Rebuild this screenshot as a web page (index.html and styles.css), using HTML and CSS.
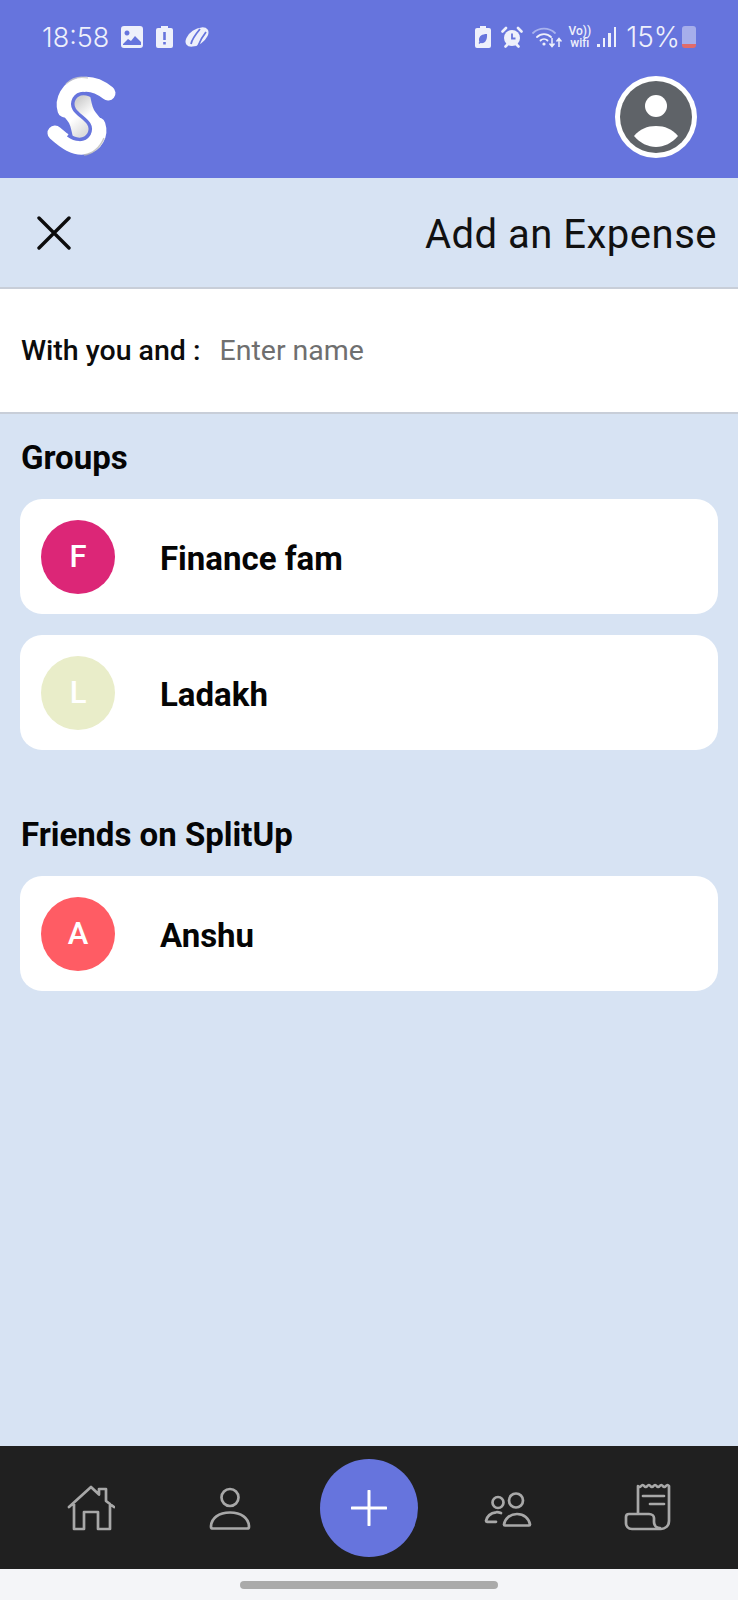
FILE: index.html
```html
<!DOCTYPE html>
<html lang="en">

<head>
    <meta charset="UTF-8">
    <meta name="viewport" content="width=device-width, initial-scale=1.0">
    <title>Add an Expense</title>

    <link rel="stylesheet" href="styles.css">
</head>

<body>
    <div class="app">
        <div class="topbar">
            <div class="statusbar">
                <div class="status-left">
                    <span class="clock">18:58</span>
                    <svg class="st-gallery" viewBox="0 0 22 22"><path fill="#eef0fb" fill-rule="evenodd" d="M3 0h16a3 3 0 0 1 3 3v16a3 3 0 0 1-3 3H3a3 3 0 0 1-3-3V3a3 3 0 0 1 3-3zM6 4.500a2.500 2.500 0 1 0 .010 0zM2 18l5-5 3 2 4-5 6 6v3H2z"/></svg>
                    <svg class="st-batt" viewBox="0 0 17 22"><path fill="#eef0fb" fill-rule="evenodd" d="M5 0h7v2h3a2 2 0 0 1 2 2v16a2 2 0 0 1-2 2H2a2 2 0 0 1-2-2V4a2 2 0 0 1 2-2h3zM7.200 6v8h2.600V6zM7.200 16v2.600h2.600V16z"/></svg>
                    <svg class="st-app" viewBox="0 0 26 20"><ellipse cx="13" cy="10" rx="13" ry="7.500" fill="#eef0fb" transform="rotate(-35 13 10)"/><path d="M7 17C8 12 11 8 16 2M14 19c2-5 4-9 8-14" fill="none" stroke="#6674dd" stroke-width="1.800"/></svg>
                </div>
                <div class="status-right">
                    <svg class="st-leaf" viewBox="0 0 16 22"><path fill="#eef0fb" fill-rule="evenodd" d="M5 0h6v2h3a2 2 0 0 1 2 2v16a2 2 0 0 1-2 2H2a2 2 0 0 1-2-2V4a2 2 0 0 1 2-2h3zM12 8C7 8 4 10 4 14c0 .7.100 1.300.400 1.900L3.500 17l1 1 1-1C10 18 12.500 14 12 8z"/></svg>
                    <svg class="st-alarm" viewBox="0 0 22 22"><circle cx="11" cy="12" r="8" fill="#eef0fb"/><path d="M11 7.500v5h3.500" fill="none" stroke="#6674dd" stroke-width="1.800"/><path d="M1.500 5.500l3.500-3.500M20.500 5.500L17 2M4.500 20.500l2-2M17.500 20.500l-2-2" stroke="#eef0fb" stroke-width="2.600" stroke-linecap="round"/></svg>
                    <svg class="st-wifi" viewBox="0 0 30 22"><g fill="none" stroke-linecap="round"><path stroke="#a9b3ee" stroke-width="1.800" d="M1 7a16 16 0 0 1 22 0"/><path stroke="#eef0fb" stroke-width="1.800" d="M5 11a10 10 0 0 1 14 0M8.500 14.500a5 5 0 0 1 7 0"/></g><circle cx="12" cy="18" r="1.600" fill="#eef0fb"/><path d="M20 12v8M17.500 17.500l2.500 3 2.500-3M27 21v-8M24.500 15.500l2.500-3 2.500 3" fill="none" stroke="#eef0fb" stroke-width="1.500"/></svg>
                    <span class="st-vowifi"><span>Vo))</span><span>wifi</span></span>
                    <span class="st-signal"><i class="s1"></i><i class="s2"></i><i class="s3"></i><i class="s4"></i></span>
                    <span class="percent">15%</span>
                    <span class="st-level"></span>
                </div>
            </div>
            <div class="brandbar">
                <svg class="logo" viewBox="0 0 84 94">
                    <defs>
                        <linearGradient id="tailTop" gradientUnits="userSpaceOnUse" x1="38" y1="30" x2="50" y2="44">
                            <stop offset="0" stop-color="#d0d0d0"/>
                            <stop offset="1" stop-color="#ffffff"/>
                        </linearGradient>
                        <linearGradient id="tailBottom" gradientUnits="userSpaceOnUse" x1="45" y1="63" x2="33" y2="49">
                            <stop offset="0" stop-color="#dcdcdc"/>
                            <stop offset="1" stop-color="#ffffff"/>
                        </linearGradient>
                    </defs>
                    <path fill="url(#tailTop)" d="M50 25C44 22 38 23 34 29C30 37 36 42 41.500 46.500C47 51 53 56 49 64L65 58C63 50 58 46 54 40C52 36 51 30 50 25z"/>
                    <path fill="url(#tailBottom)" d="M33 68C39 71 45 70 49 64C53 56 47 51 41.500 46.500C36 42 30 37 34 29L18 35C20 43 25 47 29 53C31 57 32 63 33 68z"/>
                    <path fill="none" stroke="#fff" stroke-width="15" stroke-linecap="round" d="M68 23C58 15 48 13 40 15C28 18 22 30 25 40"/>
                    <path fill="none" stroke="#fff" stroke-width="15" stroke-linecap="round" d="M15 63C25 72 35 79 45 77C56 75 61 64 58 55"/>
                    <path fill="none" stroke="#c9c9c9" stroke-width="1.500" opacity="0.800" d="M26 14C32 8 40 6 48 8"/>
                    <path fill="none" stroke="#b9b9b9" stroke-width="1.500" opacity="0.800" d="M64 68C60 78 52 84 44 85"/>
                    <path fill="none" stroke="#6674dd" stroke-width="3.500" d="M55 28C48 23 39 21 34 29C30 37 36 42 41.500 46.500C47 51 53 56 49 64C44 72 35 70 28 65"/>
                </svg>
                <span class="avatar">
                    <svg viewBox="0 0 72 72">
                        <circle cx="36" cy="36" r="36" fill="#5f6368"/>
                        <circle cx="36" cy="25" r="11" fill="#fff"/>
                        <path fill="#fff" d="M14 55C20 48 27 45 36 45S52 48 58 55C52 62 44 66 36 66S20 62 14 55z"/>
                    </svg>
                </span>
            </div>
        </div>

        <div class="titlebar">
            <svg class="close" viewBox="0 0 34 34"><path d="M2 2l30 30M32 2L2 32" stroke="#0c0c0c" stroke-width="3.400" stroke-linecap="round"/></svg>
            <h1>Add an Expense</h1>
        </div>

        <div class="with-row">
            <label for="who">With you and :</label>
            <input id="who" type="text" placeholder="Enter name">
        </div>

        <div class="content">
            <h2>Groups</h2>
            <div class="card-list">
                <div class="card">
                    <span class="badge pink">F</span>
                    <span class="card-name">Finance fam</span>
                </div>
                <div class="card">
                    <span class="badge pale">L</span>
                    <span class="card-name">Ladakh</span>
                </div>
            </div>

            <h2 class="friends-title">Friends on SplitUp</h2>
            <div class="card-list">
                <div class="card">
                    <span class="badge coral">A</span>
                    <span class="card-name">Anshu</span>
                </div>
            </div>
        </div>

        <div class="bottomnav">
            <a href="#home" class="nav-item">
                <svg class="nav-home" viewBox="0 0 48 46"><path d="M2 22L24 2l8 7.500V4h7v12l8 6M7 19v25h10V27h14v17h12V19" fill="none" stroke="#a8a8a8" stroke-width="2.700" stroke-linejoin="round" stroke-linecap="round"/></svg>
            </a>
            <a href="#profile" class="nav-item">
                <svg class="nav-profile" viewBox="0 0 42 46"><circle cx="21" cy="12.500" r="8.500" fill="none" stroke="#a8a8a8" stroke-width="2.700"/><path d="M2 42c0-9 8-14.500 19-14.500S40 33 40 42c0 1-1 1.500-2 1.500H4c-1 0-2-.5-2-1.500z" fill="none" stroke="#a8a8a8" stroke-width="2.700" stroke-linejoin="round"/></svg>
            </a>
            <a href="#add" class="nav-add">
                <svg viewBox="0 0 36 36"><path d="M18 1v34M1 18h34" stroke="#fff" stroke-width="3" stroke-linecap="round"/></svg>
            </a>
            <a href="#groups" class="nav-item">
                <svg class="nav-groups" viewBox="0 0 50 36"><g fill="none" stroke="#a8a8a8" stroke-width="2.700" stroke-linejoin="round" stroke-linecap="round"><circle cx="15" cy="11.500" r="5.500"/><circle cx="33" cy="9.500" r="7"/><path d="M18 22c-2-.7-4-1-5-.7-5 .7-9 4-10 8.500 0 .7.500 1 1 1h9"/><path d="M21 33.500c1-6 6-10.500 13-10.500s12 4.500 13 10.500c0 .7-.5 1-1 1H22c-.5 0-1-.3-1-1z"/></g></svg>
            </a>
            <a href="#bills" class="nav-item">
                <svg class="nav-bills" viewBox="0 0 64 56"><g fill="none" stroke="#a8a8a8" stroke-width="2.700" stroke-linejoin="round" stroke-linecap="round"><path d="M23 33V6q1.500 2 3.100 0t3.100 0 3.100 0 3.100 0 3.100 0 3.100 0 3.100 0 3.100 0 3.100 0 3.100 0V41c0 5-4 8-8 8H17c-4 0-6-3-6-6v-6c0-2 1-3 3-3h20c3 0 5 2 5 4v4c0 3 2 6 6 6"/><path d="M28 16h21M35 24h14"/></g></svg>
            </a>
        </div>

        <div class="gesturebar">
            <span class="handle"></span>
        </div>
    </div>
</body>

</html>
```

FILE: styles.css
```css
* {
    box-sizing: border-box;
}

body {
    font-family: Roboto, Arial, sans-serif;
    margin: 0;
    padding: 0;
    background-color: #d7e3f3;
}

.app {
    display: flex;
    flex-direction: column;
    height: 1600px;
    width: 738px;
}

/* top purple area */
.topbar {
    background-color: #6674dd;
    height: 178px;
    flex-shrink: 0;
}

.statusbar {
    display: flex;
    justify-content: space-between;
    align-items: center;
    height: 74px;
    padding: 0 42px;
}

.status-left,
.status-right {
    display: flex;
    align-items: center;
}

.clock,
.percent {
    color: #eef0fb;
    font-family: Inter, Roboto, sans-serif;
    font-weight: 300;
}

.clock {
    font-size: 27px;
}

.st-gallery {
    width: 22px;
    height: 22px;
    margin-left: 12px;
}

.st-batt {
    width: 17px;
    height: 22px;
    margin-left: 13px;
}

.st-app {
    width: 26px;
    height: 20px;
    margin-left: 11px;
}

.st-leaf {
    width: 16px;
    height: 22px;
}

.st-alarm {
    width: 22px;
    height: 22px;
    margin-left: 10px;
}

.st-wifi {
    width: 30px;
    height: 22px;
    margin-left: 9px;
}

.st-vowifi {
    display: flex;
    flex-direction: column;
    align-items: center;
    color: #eef0fb;
    font-size: 12px;
    font-weight: 500;
    line-height: 12px;
    margin-left: 6px;
}

.st-signal {
    display: flex;
    align-items: flex-end;
    gap: 3px;
    height: 20px;
    margin-left: 6px;
}

.st-signal i {
    display: block;
    width: 2.500px;
    background-color: #eef0fb;
}

.st-signal .s1 { height: 3px; }
.st-signal .s2 { height: 9px; }
.st-signal .s3 { height: 14px; }
.st-signal .s4 { height: 20px; }

.percent {
    font-size: 28px;
    margin-left: 10px;
}

.st-level {
    display: block;
    width: 14px;
    height: 22px;
    margin-left: 2px;
    border-radius: 3px;
    background: linear-gradient(#a6aeeb 80%, #e26b6b 80%);
}

.brandbar {
    display: flex;
    justify-content: space-between;
    align-items: center;
    height: 86px;
    padding: 0 41px 0 40px;
}

.logo {
    width: 84px;
    height: 94px;
}

.avatar {
    display: block;
    width: 82px;
    height: 82px;
    padding: 5px;
    border-radius: 50%;
    background-color: #fff;
}

.avatar svg {
    display: block;
    width: 72px;
    height: 72px;
}

/* title row */
.titlebar {
    display: flex;
    justify-content: space-between;
    align-items: center;
    height: 111px;
    padding: 0 21px 0 37px;
    border-bottom: 2px solid #c8ced8;
    flex-shrink: 0;
}

.close {
    width: 34px;
    height: 34px;
}

h1 {
    margin: 0;
    padding-top: 3px;
    font-size: 40px;
    font-weight: 400;
    color: #111;
    letter-spacing: 0.5px;
}

.with-row {
    display: flex;
    align-items: center;
    height: 125px;
    background-color: #fff;
    padding: 0 21px;
    border-bottom: 2px solid #c8ced8;
    flex-shrink: 0;
}

.with-row label {
    font-size: 28.500px;
    font-weight: 500;
    color: #0c0c0c;
    margin-right: 19px;
}

.with-row input {
    flex: 1;
    min-width: 0;
    border: none;
    outline: none;
    padding: 0;
    font-family: Roboto, Arial, sans-serif;
    font-size: 28.500px;
}

.with-row input::placeholder {
    color: #6f6f6f;
    opacity: 1;
}

/* lists */
.content {
    flex: 1;
    padding: 26px 20px 0;
}

h2 {
    margin: 0 0 23px;
    padding-left: 1px;
    font-size: 33px;
    line-height: 36px;
    font-weight: 700;
    color: #050505;
}

.friends-title {
    margin-top: 67px;
}

.card-list {
    display: flex;
    flex-direction: column;
    gap: 21px;
}

.card {
    display: flex;
    align-items: center;
    height: 115px;
    padding: 0 21px;
    background-color: #fff;
    border-radius: 22px;
}

.badge {
    display: flex;
    justify-content: center;
    align-items: center;
    width: 74px;
    height: 74px;
    border-radius: 50%;
    color: #fff;
    font-size: 31px;
    font-weight: 500;
    flex-shrink: 0;
}

.pink { background-color: #dc2677; }
.pale { background-color: #e9edc9; }
.coral { background-color: #ff5c64; }

.card-name {
    margin-left: 45px;
    padding-top: 3px;
    font-size: 33px;
    font-weight: 700;
    color: #050505;
}

/* bottom nav */
.bottomnav {
    display: grid;
    grid-template-columns: repeat(5, 1fr);
    align-items: center;
    justify-items: center;
    height: 123px;
    background-color: #202020;
    flex-shrink: 0;
    padding: 0 21.500px;
}

.nav-item {
    display: flex;
    justify-content: center;
    align-items: center;
}

.nav-home {
    width: 48px;
    height: 46px;
}

.nav-profile {
    width: 42px;
    height: 46px;
}

.nav-groups {
    width: 50px;
    height: 36px;
    margin-top: 3px;
}

.nav-bills {
    width: 64px;
    height: 56px;
}

.nav-add {
    display: flex;
    justify-content: center;
    align-items: center;
    width: 98px;
    height: 98px;
    border-radius: 50%;
    background-color: #6674dd;
}

.nav-add svg {
    width: 36px;
    height: 36px;
}

.gesturebar {
    display: flex;
    justify-content: center;
    align-items: center;
    height: 31px;
    background-color: #f4f5f8;
    flex-shrink: 0;
}

.handle {
    display: block;
    width: 258px;
    height: 8px;
    border-radius: 4px;
    background-color: #aaaaaa;
}
```
